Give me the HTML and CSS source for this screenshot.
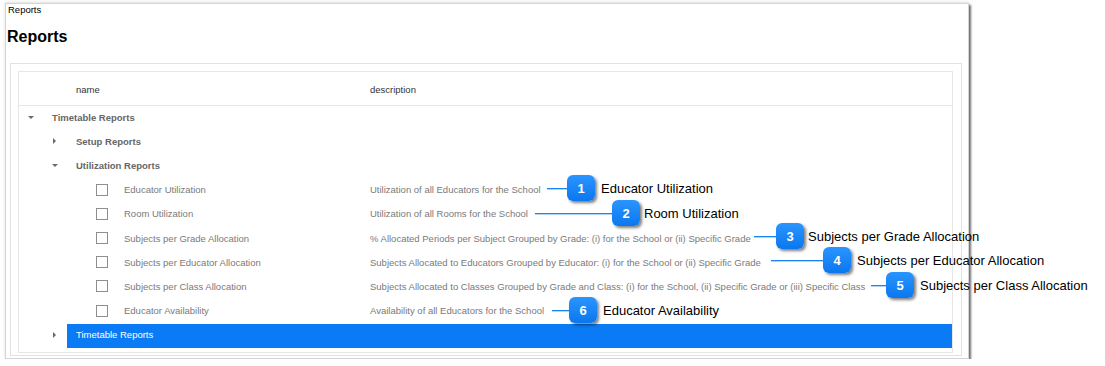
FILE: index.html
```html
<!DOCTYPE html>
<html lang="en">
<head>
    <meta charset="UTF-8">
    <title>Reports</title>
    <link rel="stylesheet" href="styles.css">
</head>
<body>

<!-- Application window -->
<div class="window">
  <div class="crumb">Reports</div>
  <h1>Reports</h1>

  <div class="panel">
    <div class="tree">
      <!-- Column headers -->
      <div class="head">
        <div class="head_name">name</div>
        <div class="head_desc">description</div>
      </div>

      <div class="row lvl1 group">
        <span class="toggle"><i class="caret down"></i></span>
        <div class="name">Timetable Reports</div>
        <div class="desc"></div>
      </div>
      <div class="row lvl2 group">
        <span class="toggle"><i class="caret right"></i></span>
        <div class="name">Setup Reports</div>
        <div class="desc"></div>
      </div>
      <div class="row lvl2 group">
        <span class="toggle"><i class="caret down"></i></span>
        <div class="name">Utilization Reports</div>
        <div class="desc"></div>
      </div>
      <div class="row lvl3">
        <span class="toggle"></span>
        <div class="name"><span class="check"></span>Educator Utilization</div>
        <div class="desc">Utilization of all Educators for the School</div>
      </div>
      <div class="row lvl3">
        <span class="toggle"></span>
        <div class="name"><span class="check"></span>Room Utilization</div>
        <div class="desc">Utilization of all Rooms for the School</div>
      </div>
      <div class="row lvl3">
        <span class="toggle"></span>
        <div class="name"><span class="check"></span>Subjects per Grade Allocation</div>
        <div class="desc">% Allocated Periods per Subject Grouped by Grade: (i) for the School or (ii) Specific Grade</div>
      </div>
      <div class="row lvl3">
        <span class="toggle"></span>
        <div class="name"><span class="check"></span>Subjects per Educator Allocation</div>
        <div class="desc">Subjects Allocated to Educators Grouped by Educator: (i) for the School or (ii) Specific Grade</div>
      </div>
      <div class="row lvl3">
        <span class="toggle"></span>
        <div class="name"><span class="check"></span>Subjects per Class Allocation</div>
        <div class="desc">Subjects Allocated to Classes Grouped by Grade and Class: (i) for the School, (ii) Specific Grade or (iii) Specific Class</div>
      </div>
      <div class="row lvl3">
        <span class="toggle"></span>
        <div class="name"><span class="check"></span>Educator Availability</div>
        <div class="desc">Availability of all Educators for the School</div>
      </div>
      <div class="row lvl2 selected">
        <span class="toggle"><i class="caret right"></i></span>
        <div class="name">Timetable Reports</div>
        <div class="desc"></div>
      </div>
    </div>
  </div>
</div>

<!-- Numbered callouts drawn over the screenshot -->
<div class="callout c1"><span class="leader"></span><span class="badge">1</span><span class="label">Educator Utilization</span></div>
<div class="callout c2"><span class="leader"></span><span class="badge">2</span><span class="label">Room Utilization</span></div>
<div class="callout c3"><span class="leader"></span><span class="badge">3</span><span class="label">Subjects per Grade Allocation</span></div>
<div class="callout c4"><span class="leader"></span><span class="badge">4</span><span class="label">Subjects per Educator Allocation</span></div>
<div class="callout c5"><span class="leader"></span><span class="badge">5</span><span class="label">Subjects per Class Allocation</span></div>
<div class="callout c6"><span class="leader"></span><span class="badge">6</span><span class="label">Educator Availability</span></div>

</body>
</html>
```

FILE: styles.css
```css
/* Basic box-sizing reset */
*, *::before, *::after {
    box-sizing: border-box;
}

body {
    margin: 0;
    background: #fff;
    font-family: "Liberation Sans", Arial, sans-serif;
    color: #000;
}

/* Window frame with drop shadow */
.window {
    width: 964px;
    height: 356px;
    margin: 3px 0 0 5px;
    padding: 0 5px 0 4px;
    border: 1px solid #d4d4d4;
    box-shadow: 2px 2px 2px rgba(0, 0, 0, 0.55), 0 -1px 3px rgba(0, 0, 0, 0.12);
}

.crumb {
    height: 11px;
    padding-left: 1px;
    font-size: 9.5px;
    line-height: 11px;
    margin-left: -3px;
}

h1 {
    margin: 12px 0 16px -3px;
    font-size: 16px;
    line-height: 20px;
    font-weight: bold;
}

/* Outer and inner boxes around the tree grid */
.panel {
    width: 952px;
    padding: 7px 8px 2px 7px;
    border: 1px solid #e2e2e2;
}

.tree {
    padding-bottom: 4px;
    border: 1px solid #e6e6e6;
}

.head {
    display: flex;
    height: 34px;
    padding-top: 2px;
    align-items: center;
    border-bottom: 1px solid #e6e6e6;
    font-size: 9.5px;
    color: #333;
}

.head_name {
    width: 351px;
    padding-left: 57px;
}

/* Tree rows */
.row {
    display: flex;
    height: 24.2px;
    align-items: stretch;
    font-size: 9.5px;
    color: #7a7a7a;
}

.toggle {
    display: flex;
    width: 24px;
    padding-bottom: 2px;
    align-items: center;
    justify-content: center;
}

.lvl2 .toggle { margin-left: 24px; }
.lvl3 .toggle { margin-left: 48px; }

.caret {
    display: block;
    width: 0;
    height: 0;
}

.caret.down {
    border-left: 3px solid transparent;
    border-right: 3px solid transparent;
    border-top: 3px solid #6a6a6a;
}

.caret.right {
    margin-left: -1px;
    border-top: 3px solid transparent;
    border-bottom: 3px solid transparent;
    border-left: 3px solid #6a6a6a;
}

.name {
    display: flex;
    align-items: center;
    padding: 0 0 2px 9px;
}

.lvl1 .name { width: 327px; }
.lvl2 .name { width: 303px; }
.lvl3 .name { width: 279px; padding-left: 5px; }

.desc {
    display: flex;
    flex: 1;
    padding-bottom: 2px;
    align-items: center;
}

.group .name {
    font-weight: bold;
    color: #666;
}

.check {
    width: 12px;
    height: 12px;
    margin-right: 16px;
    border: 1px solid #8e8e8e;
    background: #fff;
}

/* Selected row highlight */
.selected .name,
.selected .desc {
    background: #0a7bf5;
    color: #fff;
}

/* Callouts: leader line, numbered badge and caption */
.callout {
    position: absolute;
    display: flex;
    height: 26px;
    align-items: center;
}

.leader {
    height: 1px;
    background: #1b84f0;
    box-shadow: 0 1px 0 rgba(27, 132, 240, 0.35);
}

.badge {
    display: flex;
    width: 28px;
    height: 26px;
    align-items: center;
    justify-content: center;
    border-radius: 6px;
    background: linear-gradient(#2a95ff, #0a77ee);
    box-shadow: 2px 2px 3px rgba(0, 0, 0, 0.5);
    color: #fff;
    font-size: 13px;
    font-weight: bold;
}

.label {
    margin-left: 6px;
    font-size: 13px;
    color: #000;
    white-space: nowrap;
}

.c1 { left: 547px; top: 175px; }
.c1 .leader { width: 20px; }
.c2 { left: 535px; top: 200px; }
.c2 .leader { width: 77px; }
.c2 .label { margin-left: 4px; }
.c3 { left: 754px; top: 223px; }
.c3 .leader { width: 22px; }
.c3 .label { margin-left: 4px; }
.c4 { left: 771px; top: 247px; }
.c4 .leader { width: 52px; }
.c5 { left: 871px; top: 272px; }
.c5 .leader { width: 15px; }
.c6 { left: 552px; top: 297px; }
.c6 .leader { width: 17px; }
```
